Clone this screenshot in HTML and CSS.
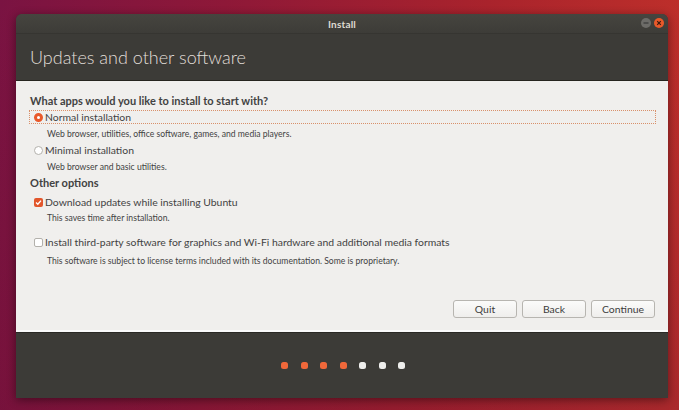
FILE: index.html
```html
<!DOCTYPE html>
<html>
<head>
<meta charset="utf-8">
<title>Install</title>
<link rel="stylesheet" href="styles.css">
</head>
<body>
<div class="window">
  <div class="titlebar">
    <span class="title">Install</span>
    <div class="controls">
      <span class="ctl min"><svg width="10" height="10" viewBox="0 0 10 10"><rect x="2.5" y="4.5" width="5" height="1" fill="#2e2e2e"/></svg></span>
      <span class="ctl close"><svg width="10" height="10" viewBox="0 0 10 10"><path d="M3.2 3.2 L6.8 6.8 M6.8 3.2 L3.2 6.8" stroke="#3a1a10" stroke-width="1.2"/></svg></span>
    </div>
  </div>
  <div class="header">Updates and other software</div>
  <div class="content">
    <div class="section q">What apps would you like to install to start with?</div>
    <div class="opt focus r1"><span class="radio on"></span>Normal installation</div>
    <div class="desc d1">Web browser, utilities, office software, games, and media players.</div>
    <div class="opt r2"><span class="radio"></span>Minimal installation</div>
    <div class="desc d2">Web browser and basic utilities.</div>
    <div class="section oo">Other options</div>
    <div class="opt r3"><span class="check on"><svg width="9" height="9" viewBox="0 0 9 9"><path d="M2 4.6 L3.8 6.3 L7 2.6" stroke="#fff" stroke-width="1.4" fill="none"/></svg></span>Download updates while installing Ubuntu</div>
    <div class="desc d3">This saves time after installation.</div>
    <div class="opt r4"><span class="check"></span>Install third-party software for graphics and Wi-Fi hardware and additional media formats</div>
    <div class="desc d4">This software is subject to license terms included with its documentation. Some is proprietary.</div>
    <div class="buttons">
      <button class="btn">Quit</button>
      <button class="btn">Back</button>
      <button class="btn">Continue</button>
    </div>
  </div>
  <div class="footer">
    <span class="dot done"></span><span class="dot done"></span><span class="dot done"></span><span class="dot done"></span><span class="dot"></span><span class="dot"></span><span class="dot"></span>
  </div>
</div>
</body>
</html>
```

FILE: styles.css
```css
html, body {
  margin: 0;
  padding: 0;
  width: 679px;
  height: 410px;
  overflow: hidden;
}
body {
  font-family: "Lato", "Open Sans", sans-serif;
  background:
    linear-gradient(180deg, rgba(170,30,40,0.0) 0%, rgba(90,10,50,0.25) 100%),
    linear-gradient(100deg, #7a1342 0%, #8e1838 30%, #a9232c 65%, #c4332a 100%);
  padding-top: 14px;
  padding-left: 16px;
  box-sizing: border-box;
}
.window {
  width: 652px;
  height: 384px;
  display: flex;
  flex-direction: column;
  border-radius: 6px 6px 0 0;
  overflow: hidden;
  box-shadow: 0 2px 10px rgba(0,0,0,0.45);
  background: #3c3b37;
}
.titlebar {
  height: 19px;
  flex: none;
  display: flex;
  align-items: center;
  justify-content: center;
  position: relative;
  background: linear-gradient(#46453f, #3d3c38);
  border-bottom: 1px solid #363531;
}
.title {
  color: #dfdbd2;
  font-size: 10px;
  font-weight: bold;
  letter-spacing: 0.2px;
}
.controls {
  position: absolute;
  right: 4px;
  top: 4px;
  display: flex;
  gap: 3px;
}
.ctl {
  width: 10px;
  height: 10px;
  border-radius: 50%;
  display: block;
}
.ctl svg { display: block; }
.min { background: #6d6c68; }
.close { background: #e9592a; }
.header {
  height: 46px;
  flex: none;
  display: flex;
  align-items: center;
  padding-left: 14px;
  color: #e2dfd9;
  font-size: 18px;
  font-weight: 300;
  background: #3c3b37;
  border-bottom: 1px solid #26251f;
}
.content {
  height: 251px;
  flex: none;
  box-sizing: border-box;
  background: #f0efed;
  padding: 14px 13px 12px 14px;
  display: flex;
  flex-direction: column;
  color: #424242;
  border-bottom: 2px solid #fafafa;
}
.section {
  font-weight: bold;
  font-size: 11px;
  line-height: 12px;
  height: 12px;
}
.opt {
  font-size: 10.4px;
  line-height: 12px;
  height: 12px;
  display: flex;
  align-items: center;
  white-space: nowrap;
}
.focus {
  outline: 1px dotted #d9906a;
  outline-offset: 0;
}
.desc {
  font-size: 8.6px;
  line-height: 12px;
  height: 12px;
  padding-left: 17px;
  white-space: nowrap;
}
.r1 { margin-top: 4px; }
.d1 { margin-top: 5px; }
.r2 { margin-top: 4px; }
.d2 { margin-top: 5px; }
.oo { margin-top: 4px; }
.r3 { margin-top: 7px; }
.d3 { margin-top: 4px; }
.r4 { margin-top: 12px; }
.d4 { margin-top: 7px; }
.radio {
  width: 9px;
  height: 9px;
  box-sizing: border-box;
  border-radius: 50%;
  border: 1px solid #b3b1ac;
  background: #fff;
  margin-left: 4px;
  margin-right: 2px;
  flex: none;
}
.radio.on {
  border: 3px solid #e9592a;
  background: #fff;
}
.check {
  width: 9px;
  height: 9px;
  box-sizing: border-box;
  border-radius: 2px;
  border: 1px solid #b3b1ac;
  background: #fff;
  margin-left: 4px;
  margin-right: 2px;
  flex: none;
  display: flex;
  align-items: center;
  justify-content: center;
}
.check.on {
  border: none;
  background: #e2562b;
}
.check svg { display: block; }
.buttons {
  margin-top: auto;
  display: flex;
  justify-content: flex-end;
  gap: 5px;
}
.btn {
  width: 64px;
  height: 18px;
  font-family: "Lato", "Open Sans", sans-serif;
  font-size: 10.4px;
  color: #3c3c3c;
  border: 1px solid #b7b5b0;
  border-radius: 3px;
  background: linear-gradient(#fbfbfa, #efeeec);
  padding: 0;
  margin: 0;
}
.footer {
  flex: 1;
  display: flex;
  align-items: center;
  justify-content: center;
  gap: 12.5px;
  background: #3c3b37;
  border-top: 1px solid #2a2925;
  padding-left: 2px;
}
.dot {
  width: 7px;
  height: 7px;
  border-radius: 2.5px;
  background: #eeeeec;
}
.dot.done { background: #f0683a; }
```
